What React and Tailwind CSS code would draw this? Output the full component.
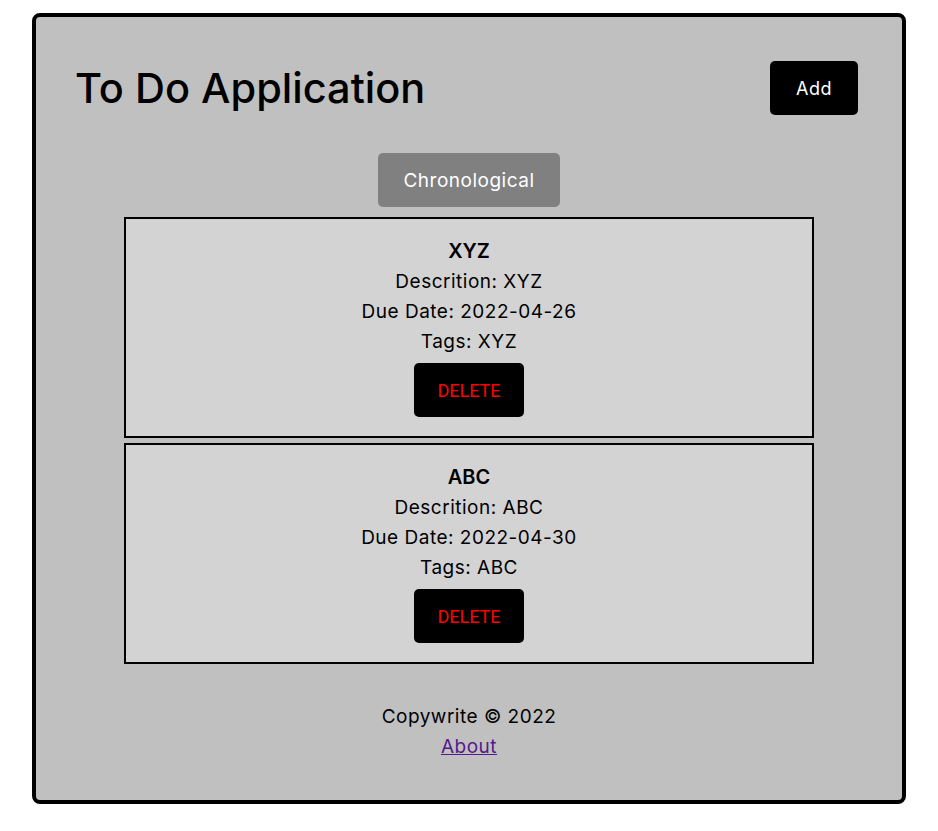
import React from "react";

const todos = [
  { title: "XYZ", desc: "XYZ", due: "2022-04-26", tags: "XYZ" },
  { title: "ABC", desc: "ABC", due: "2022-04-30", tags: "ABC" },
];

function Card({ t }) {
  return (
    <div className="w-[690px] border-2 border-black bg-[#d3d3d3] pt-4 pb-[19px] flex flex-col items-center text-black">
      <div className="text-[20px] leading-[32px] font-semibold">{t.title}</div>
      <div className="text-[19px] leading-[30px] tracking-[0.5px]">Descrition: {t.desc}</div>
      <div className="text-[19px] leading-[30px] tracking-[0.5px]">Due Date: {t.due}</div>
      <div className="text-[19px] leading-[30px] tracking-[0.5px]">Tags: {t.tags}</div>
      <button className="mt-[6px] w-[110px] h-[54px] bg-black rounded-[5px] text-[#ff0000] text-[18px] font-['Roboto',sans-serif]">
        DELETE
      </button>
    </div>
  );
}

export default function App() {
  return (
    <div className="bg-white min-h-[831px] pt-[13px] px-[32px] pb-[28px] font-['Inter',sans-serif]">
      <div className="w-[874px] border-4 border-black rounded-[8px] bg-[#c0c0c0] flex flex-col items-center">
        <div className="w-full flex items-center justify-between pt-[44px] pl-[39px] pr-[44px]">
          <h1 className="text-[41.5px] leading-[54px] font-medium text-black">To Do Application</h1>
          <button className="w-[88px] h-[54px] bg-black rounded-[5px] text-white text-[18px] tracking-[0.5px]">Add</button>
        </div>
        <button className="mt-[38px] w-[182px] h-[54px] bg-[#808080] rounded-[5px] text-white text-[19px] tracking-[0.5px] pt-[2px]">
          Chronological
        </button>
        <div className="mt-[10px] flex flex-col gap-[5px]">
          {todos.map((t) => (
            <Card key={t.title} t={t} />
          ))}
        </div>
        <div className="mt-[38px] mb-[38px] flex flex-col items-center text-[19px] leading-[30px] tracking-[0.5px] text-black">
          <div>Copywrite © 2022</div>
          <a href="#" className="underline text-[#551a8b]">About</a>
        </div>
      </div>
    </div>
  );
}
